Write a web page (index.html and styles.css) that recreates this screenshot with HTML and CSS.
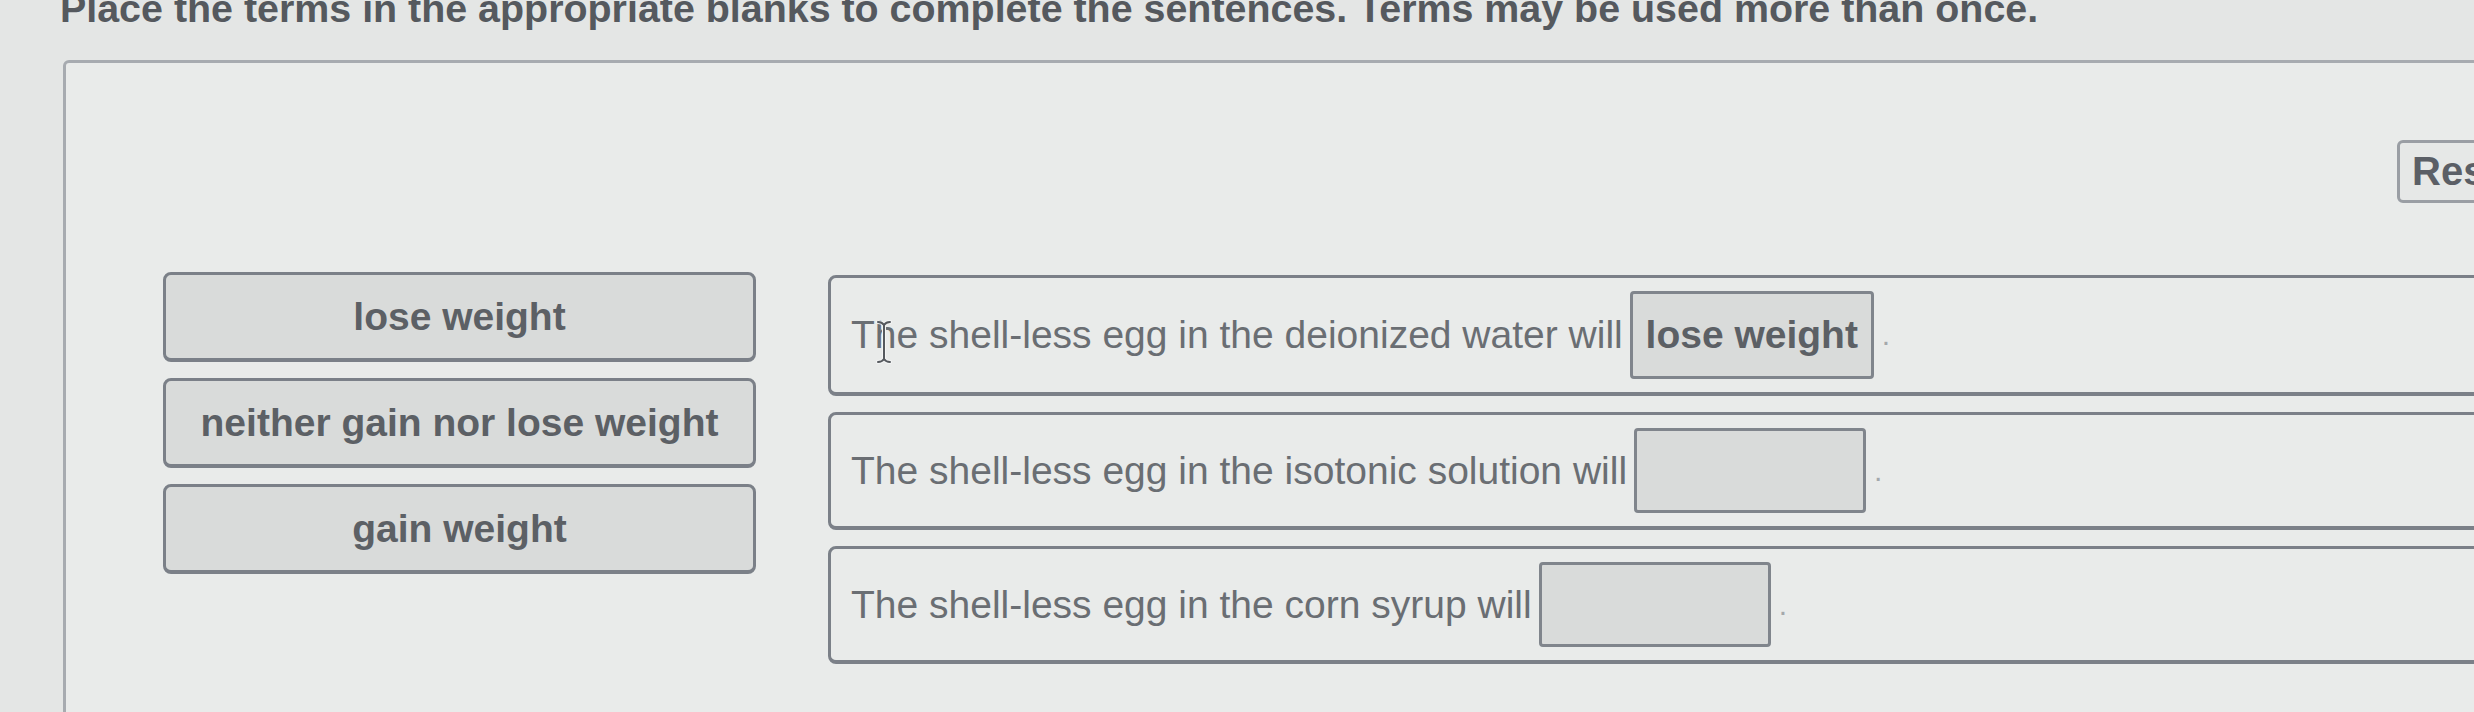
FILE: index.html
```html
<!DOCTYPE html>
<html lang="en">
<head>
<meta charset="utf-8">
<title>Drag and drop: osmosis</title>
<link rel="stylesheet" href="styles.css">
</head>
<body>
<p class="prompt">Place the terms in the appropriate blanks to complete the sentences. Terms may be used more than once.</p>
<section class="panel">
  <div class="toolbar">
    <button class="reset" type="button">Reset</button>
  </div>
  <div class="workspace">
    <div class="bank">
      <div class="term">lose weight</div>
      <div class="term">neither gain nor lose weight</div>
      <div class="term">gain weight</div>
    </div>
    <div class="sentences">
      <div class="sentence">
        <span class="text">The shell-less egg in the deionized water will</span>
        <span class="blank filled">lose weight</span>
        <span class="dot">.</span>
        <svg class="ibeam" width="16" height="44" viewBox="0 0 16 44" aria-hidden="true">
          <path d="M2 2 Q6 2 8 5 Q10 2 14 2 M8 5 V39 M2 42 Q6 42 8 39 Q10 42 14 42" fill="none" stroke="#f4f5f5" stroke-width="4" stroke-linecap="round"/>
          <path d="M2 2 Q6 2 8 5 Q10 2 14 2 M8 5 V39 M2 42 Q6 42 8 39 Q10 42 14 42" fill="none" stroke="#55595e" stroke-width="2" stroke-linecap="round"/>
        </svg>
      </div>
      <div class="sentence">
        <span class="text">The shell-less egg in the isotonic solution will</span>
        <span class="blank"></span>
        <span class="dot">.</span>
      </div>
      <div class="sentence">
        <span class="text">The shell-less egg in the corn syrup will</span>
        <span class="blank"></span>
        <span class="dot">.</span>
      </div>
    </div>
  </div>
</section>
</body>
</html>
```

FILE: styles.css
```css
html, body {
  margin: 0;
  padding: 0;
  overflow: hidden;
  background: #e4e6e5;
  font-family: "Liberation Sans", Arial, sans-serif;
}

.prompt {
  margin: -11px 0 0 60px;
  height: 39px;
  font-size: 39.4px;
  line-height: 39px;
  font-weight: 700;
  color: #55595e;
  white-space: nowrap;
}

.panel {
  margin: 32px 0 0 63px;
  width: 2508px;
  min-height: 760px;
  box-sizing: border-box;
  border: 3px solid #a7abb0;
  border-radius: 6px;
  background: #e9ebea;
  padding: 77px 32px 0 97px;
}

.toolbar {
  display: flex;
  justify-content: flex-end;
}

.reset {
  height: 63px;
  padding: 0 12px;
  border: 3px solid #9a9ea4;
  border-radius: 6px;
  background: #e6e8e7;
  font-family: "Liberation Sans", Arial, sans-serif;
  font-size: 40px;
  font-weight: 700;
  color: #5b5f66;
}

.workspace {
  display: flex;
  align-items: flex-start;
  gap: 72px;
  margin-top: 69px;
}

.bank {
  display: flex;
  flex-direction: column;
  gap: 16px;
  flex: 0 0 593px;
}

.term {
  height: 90px;
  box-sizing: border-box;
  display: flex;
  align-items: center;
  justify-content: center;
  border: 3px solid #7b8088;
  border-bottom-width: 4px;
  border-radius: 8px;
  background: #d9dbda;
  font-size: 39px;
  font-weight: 700;
  color: #5c6065;
}

.sentences {
  flex: 1;
  display: flex;
  flex-direction: column;
  gap: 16px;
  padding-top: 3px;
}

.sentence {
  position: relative;
  display: flex;
  align-items: center;
  padding: 13px 20px;
  border: 3px solid #7b8088;
  border-bottom-width: 4px;
  border-radius: 8px;
  background: #e9ebea;
  font-size: 39px;
  color: #6a6e73;
}

.text {
  white-space: nowrap;
}

.blank {
  display: inline-flex;
  align-items: center;
  justify-content: center;
  box-sizing: border-box;
  width: 232px;
  height: 85px;
  margin-left: 7px;
  border: 3px solid #80858c;
  border-radius: 4px;
  background: #d9dbda;
}

.blank.filled {
  width: 244px;
  height: 88px;
  font-weight: 700;
  color: #5c6065;
  white-space: nowrap;
}

.dot {
  margin-left: 8px;
  color: #a4a8ac;
  font-size: 30px;
}

.ibeam {
  position: absolute;
  left: 45px;
  top: 42px;
}
```
